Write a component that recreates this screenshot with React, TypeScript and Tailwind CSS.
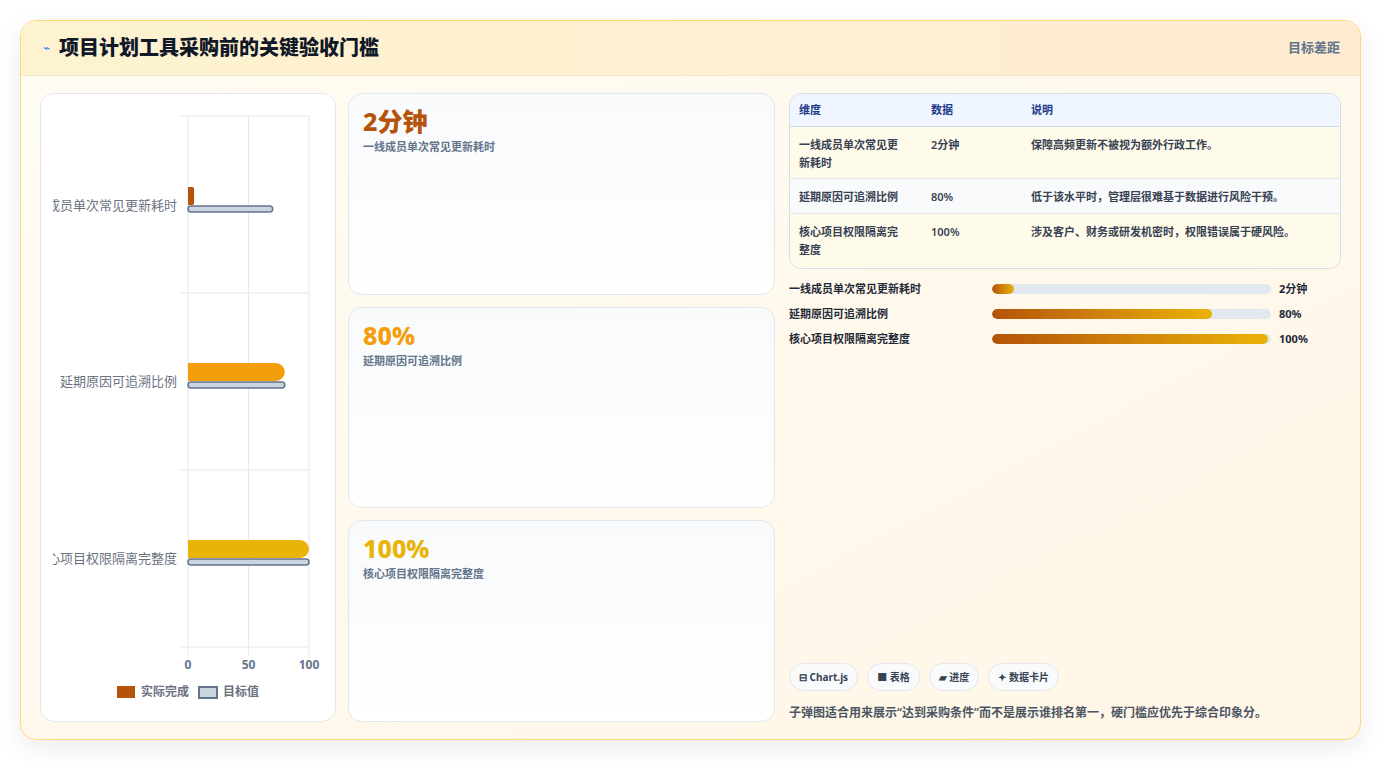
import React from "react";

const F = { fontFamily: '"Noto Sans", "Noto Sans CJK SC", sans-serif' };

function Chart() {
  const rows = [
    { label: "一线成员单次常见更新耗时", a: 5, t: 70, c: "#b45309", y: 111 },
    { label: "延期原因可追溯比例", a: 80, t: 80, c: "#f59e0b", y: 287 },
    { label: "核心项目权限隔离完整度", a: 100, t: 100, c: "#eab308", y: 464 },
  ];
  const x0 = 147, w = 121;
  return (
    <svg width="294" height="627" className="block">
      <defs>
        <clipPath id="cl"><rect x="12" y="0" width="282" height="627" /></clipPath>
      </defs>
      {[0, 50, 100].map((v) => (
        <line key={v} x1={x0 + (w * v) / 100} x2={x0 + (w * v) / 100} y1="22" y2="561" stroke="#e5e7eb" />
      ))}
      {[22, 199, 376, 553].map((y) => (
        <line key={y} x1="139" x2="268" y1={y} y2={y} stroke="#e5e7eb" />
      ))}
      {rows.map((r) => {
        const bw = (w * r.a) / 100;
        const rad = Math.min(9, bw / 3);
        return (
          <g key={r.label}>
            <text x="136" y={r.y + 5} textAnchor="end" fontSize="13" fill="#6b7280" clipPath="url(#cl)" style={F}>{r.label}</text>
            <path d={`M${x0} ${r.y - 18} h${bw - rad} a${rad} ${rad} 0 0 1 ${rad} ${rad} v${18 - 2 * rad} a${rad} ${rad} 0 0 1 -${rad} ${rad} h-${bw - rad} z`} fill={r.c} />
            <rect x={x0} y={r.y + 1} width={(w * r.t) / 100} height="6" rx="3" fill="#cbd5e1" stroke="#64748b" strokeWidth="1.5" />
          </g>
        );
      })}
      {[0, 50, 100].map((v) => (
        <text key={v} x={x0 + (w * v) / 100} y="575" textAnchor="middle" fontSize="12" fontWeight="700" fill="#64748b" style={F}>{v}</text>
      ))}
      <rect x="76" y="592" width="18" height="12" fill="#b45309" />
      <text x="100" y="602" fontSize="12" fontWeight="700" fill="#6b7280" style={F}>实际完成</text>
      <rect x="158" y="593" width="18" height="11" fill="#cbd5e1" stroke="#64748b" strokeWidth="2" />
      <text x="182" y="602" fontSize="12" fontWeight="700" fill="#6b7280" style={F}>目标值</text>
    </svg>
  );
}

export default function App() {
  const cards = [
    { v: "2分钟", l: "一线成员单次常见更新耗时", c: "text-[#b45309]" },
    { v: "80%", l: "延期原因可追溯比例", c: "text-[#f59e0b]" },
    { v: "100%", l: "核心项目权限隔离完整度", c: "text-[#eab308]" },
  ];
  const table = [
    ["一线成员单次常见更新耗时", "2分钟", "保障高频更新不被视为额外行政工作。", "h-[52px] bg-[#fffbeb]"],
    ["延期原因可追溯比例", "80%", "低于该水平时，管理层很难基于数据进行风险干预。", "h-[35px] bg-[#f8fafc]"],
    ["核心项目权限隔离完整度", "100%", "涉及客户、财务或研发机密时，权限错误属于硬风险。", "h-[54px] bg-[#fffbeb]"],
  ];
  const bars = [
    ["一线成员单次常见更新耗时", 8, "2分钟"],
    ["延期原因可追溯比例", 79, "80%"],
    ["核心项目权限隔离完整度", 99, "100%"],
  ] as const;
  return (
    <div className="min-h-screen bg-white p-[20px] pb-[21px]" style={F}>
      <div className="h-[720px] rounded-[16px] border border-[#fcd97a] bg-gradient-to-br from-[#fffcf3] to-[#fff6e6] shadow-[0_8px_24px_rgba(0,0,0,0.08)] overflow-hidden flex flex-col">
        <div className="h-[55px] shrink-0 flex items-center justify-between px-[20px] bg-gradient-to-r from-[#fdf3d0] to-[#feebd2] border-b border-[#f3e6c8]">
          <div className="flex items-center gap-[9px]">
            <span className="text-[#3b82f6] text-[12px] ml-[2px]">⌁</span>
            <span className="text-[20px] font-extrabold text-[#111827]">项目计划工具采购前的关键验收门槛</span>
          </div>
          <span className="text-[13px] font-semibold text-[#64748b]">目标差距</span>
        </div>
        <div className="flex-1 flex gap-[12px] px-[19px] pt-[17px] pb-[18px]">
          <div className="w-[296px] rounded-[14px] border border-[#e5e7eb] bg-white overflow-hidden">
            <Chart />
          </div>
          <div className="w-[427px] flex flex-col gap-[12px]">
            {cards.map((c) => (
              <div key={c.v} className="flex-1 rounded-[14px] border border-[#e2e8f0] bg-gradient-to-b from-[#f8fafc] to-white px-[14px] pt-[9px]">
                <div className={`text-[25px] font-extrabold leading-[36px] ${c.c}`}>{c.v}</div>
                <div className="text-[11px] font-semibold text-[#64748b]">{c.l}</div>
              </div>
            ))}
          </div>
          <div className="flex-1 flex flex-col pl-[2px]">
            <div className="rounded-[12px] border border-[#d6dde6] overflow-hidden text-[11px] font-semibold text-[#374151]">
              <div className="h-[33px] flex items-center bg-[#eff6ff] border-b border-[#cfdbea] text-[#1e3a8a] font-bold">
                <div className="w-[141px] pl-[9px]">维度</div>
                <div className="w-[100px]">数据</div>
                <div>说明</div>
              </div>
              {table.map((r, i) => (
                <div key={i} className={`flex items-start pt-[9px] ${r[3]} ${i < 2 ? "border-b border-[#e5e7eb]" : ""}`}>
                  <div className="w-[141px] pl-[9px] pr-[26px] leading-[18px]">{r[0]}</div>
                  <div className="w-[100px] leading-[18px]">{r[1]}</div>
                  <div className="leading-[18px]">{r[2]}</div>
                </div>
              ))}
            </div>
            <div className="mt-[11px] flex flex-col gap-[7px]">
              {bars.map(([l, p, v]) => (
                <div key={l} className="flex items-center h-[18px] text-[11px] font-semibold text-[#1f2937]">
                  <div className="w-[203px]">{l}</div>
                  <div className="w-[279px] h-[10px] rounded-full bg-[#e2e8f0] overflow-hidden">
                    <div className="h-full rounded-full bg-gradient-to-r from-[#b45309] to-[#eab308]" style={{ width: `${p}%` }} />
                  </div>
                  <div className="ml-[8px] font-bold">{v}</div>
                </div>
              ))}
            </div>
            <div className="mt-auto flex gap-[9px]">
              {["⊟ Chart.js", "■ 表格", "▰ 进度", "✦ 数据卡片"].map((t) => (
                <div key={t} className="h-[28px] px-[9px] flex items-center rounded-full border border-[#e5e7eb] bg-[#f8fafc] text-[10px] font-bold text-[#374151]">{t}</div>
              ))}
            </div>
            <div className="mt-[13px] text-[12px] font-semibold text-[#4b5563] leading-[18px]">子弹图适合用来展示“达到采购条件”而不是展示谁排名第一，硬门槛应优先于综合印象分。</div>
          </div>
        </div>
      </div>
    </div>
  );
}
